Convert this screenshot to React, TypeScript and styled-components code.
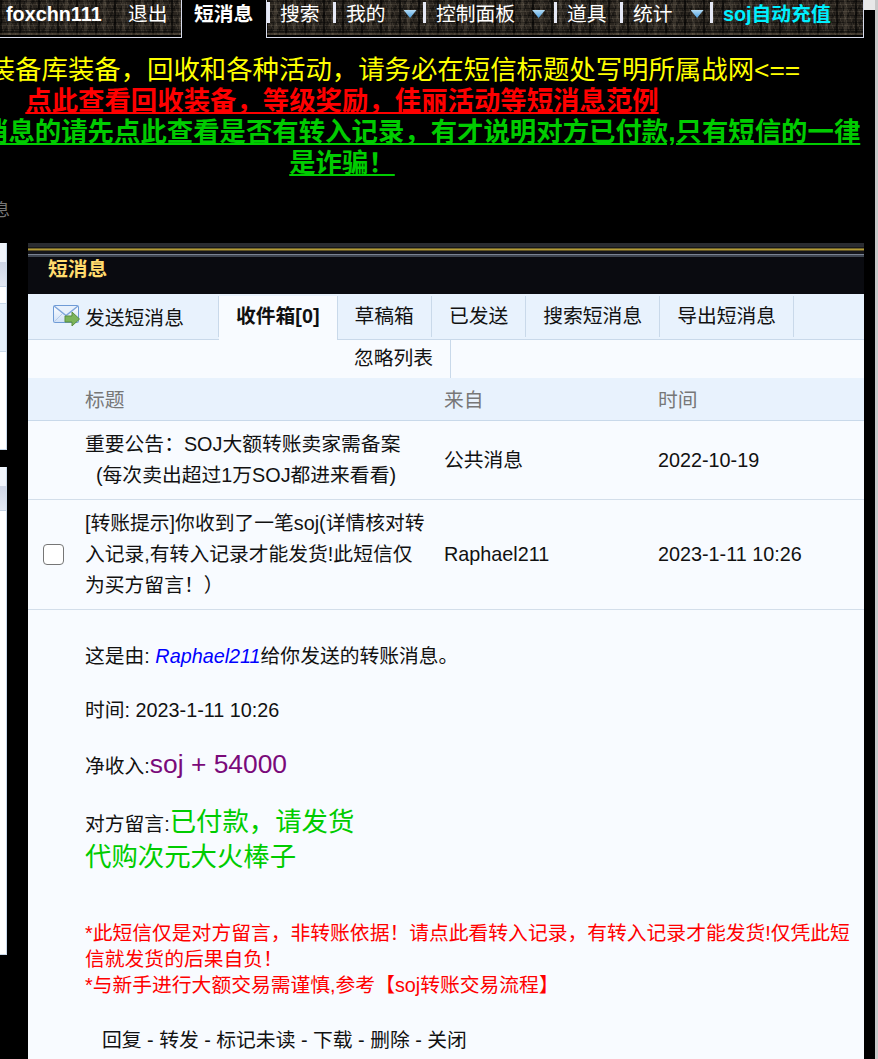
import React from "react";
import styled, { createGlobalStyle } from "styled-components";

const Global = createGlobalStyle`
  html, body { margin: 0; padding: 0; background: #000; overflow: hidden; }
  body { font-family: "Liberation Sans", "Noto Sans CJK SC", sans-serif; font-size: 19.8px; color: #000; }
  * { box-sizing: border-box; }
`;

const Page = styled.div`
  position: relative;
  width: 878px;
  height: 1059px;
  overflow: hidden;
  background: #000;
`;

const Scrollbar = styled.div`
  position: absolute;
  top: 0;
  right: 0;
  width: 3px;
  height: 100%;
  background: #c8c8c8;
`;

const Corner = styled.div`
  position: absolute;
  top: 0;
  right: 3px;
  width: 11px;
  height: 10px;
  background: #e8e8e8;
`;

const Nav = styled.nav`
  display: flex;
  align-items: flex-start;
  width: 864px;
  height: 38px;
  padding-left: 6px;
  border-right: 1px solid #d8dcec;
  border-bottom: 1px solid #d8dcec;
  background-color: #2a251f;
  background-image:
    linear-gradient(180deg, transparent 0 31px, rgba(0,0,0,.55) 31px 33px, rgba(120,105,85,.35) 33px 35px, #000 35px),
    repeating-linear-gradient(90deg, rgba(0,0,0,.6) 0 2px, transparent 2px 8px, rgba(190,175,150,.13) 8px 11px, transparent 11px 19px),
    repeating-linear-gradient(0deg, rgba(0,0,0,.4) 0 1px, transparent 1px 4px, rgba(210,195,170,.12) 4px 5px, transparent 5px 7px),
    repeating-linear-gradient(71deg, rgba(220,205,180,.09) 0 1px, transparent 1px 5px),
    repeating-linear-gradient(-67deg, rgba(0,0,0,.3) 0 2px, transparent 2px 7px);
`;

const NavUser = styled.span`
  width: 122px;
  height: 28px;
  line-height: 29px;
  font-weight: 700;
  color: #fff;
`;

const NavPlain = styled.span`
  width: 53px;
  height: 28px;
  line-height: 29px;
  color: #fff;
`;

const NavActive = styled.span`
  width: 86px;
  height: 38px;
  margin-bottom: -1px;
  padding-left: 12px;
  line-height: 29px;
  font-weight: 700;
  color: #fff;
  background: #000;
  border-left: 1px solid #d8dcec;
  border-right: 1px solid #d8dcec;
`;

const NavItem = styled.span<{ $w: number }>`
  display: flex;
  align-items: flex-start;
  width: ${(p) => p.$w}px;
  height: 21px;
  margin: 2px 0 0;
  padding-left: 10px;
  border-left: 3px solid #e6e9f6;
  line-height: 25px;
  color: #fff;
  white-space: nowrap;
`;

const NavCyan = styled(NavItem)`
  font-weight: 700;
  color: #00f0ff;
`;

const Caret = styled.i<{ $gap: number }>`
  display: block;
  width: 13px;
  height: 8px;
  margin-left: ${(p) => p.$gap}px;
  margin-top: 8px;
  background: linear-gradient(180deg, #b4dcf6, #4a9fe0);
  clip-path: polygon(0 0, 100% 0, 50% 100%);
`;

const Banner = styled.div`
  width: 1040px;
  margin: 17px 0 0 -178px;
  text-align: center;
  font-size: 26.4px;
  line-height: 31px;
  white-space: nowrap;
`;

const BannerLine = styled.div``;

const YellowText = styled.span`
  color: #ffff00;
  position: relative;
  left: 3px;
`;

const RedLink = styled.a`
  color: #ff0000;
  font-weight: 700;
  text-decoration: underline;
`;

const GreenLink = styled.a`
  color: #00cc00;
  font-weight: 700;
  text-decoration: underline;
`;

const Crumb = styled.div`
  margin: 22px 0 0 -41px;
  height: 20px;
  line-height: 20px;
  font-size: 17px;
  color: #777;
`;

const Columns = styled.div`
  display: flex;
  align-items: flex-start;
  gap: 21px;
  margin-top: 22px;
`;

const Side = styled.aside`
  display: flex;
  flex-direction: column;
  gap: 17px;
  flex: 0 0 7px;
`;

const SideBox = styled.div<{ $h: number }>`
  height: ${(p) => p.$h}px;
  background: #fff;
  border-right: 1px solid #c9d9ea;
  border-bottom: 1px solid #c9d9ea;
`;

const SideTop = styled.div`
  height: 19px;
  background: #f0f4fb;
`;

const SideHead = styled.div`
  height: 25px;
  background: linear-gradient(180deg, #cfd6e6, #e3e8f2);
  border-bottom: 1px solid #c4d2e4;
`;

const SideGap = styled.div`
  height: 16px;
  background: #fff;
`;

const SideBlue = styled.div`
  height: 49px;
  background: #e6f0fb;
  border-top: 1px solid #c9d9ea;
  border-bottom: 1px solid #c9d9ea;
`;

const Panel = styled.main`
  flex: 0 0 836px;
  min-height: 830px;
  background: #f8fbff;
`;

const PanelHead = styled.header`
  height: 51px;
  padding: 14px 0 0 20px;
  background:
    linear-gradient(180deg,
      #2a2c31 0 4px, #17171a 4px 5px, #6e6228 5px 6px, #b39b38 6px 7px, #5e5224 7px 8px,
      #15161b 8px 11px, #7a8392 11px 12px, #3f4651 12px 14px, #0a0b10 14px);
  line-height: 24px;
  font-weight: 700;
  color: #ffdc6e;
`;

const TabStrip = styled.div`
  display: flex;
  align-items: flex-start;
  height: 46px;
  padding-top: 2px;
  background: #e8f2fd;
  border-bottom: 1px solid #c9d9ea;
`;

const ComposeTab = styled.a`
  display: flex;
  align-items: center;
  gap: 5px;
  width: 191px;
  height: 41px;
  padding-left: 25px;
  border-right: 1px solid #c9d9ea;
  color: #111;
`;

const Tab = styled.a<{ $active?: boolean }>`
  height: ${(p) => (p.$active ? 44 : 41)}px;
  padding: 0 17px;
  line-height: 41px;
  border-right: 1px solid #c9d9ea;
  color: #111;
  font-weight: ${(p) => (p.$active ? 700 : 400)};
  background: ${(p) => (p.$active ? "#f8fbff" : "transparent")};
`;

const TabOverflow = styled.div`
  display: flex;
  height: 38px;
  padding-left: 309px;
`;

const TabWrapped = styled.a`
  width: 114px;
  padding-left: 17px;
  line-height: 36px;
  border-right: 1px solid #c9d9ea;
  color: #111;
`;

const Row = styled.div`
  display: grid;
  grid-template-columns: 57px 359px 214px 1fr;
  align-items: center;
  border-bottom: 1px solid #d3deea;
  line-height: 31px;
  color: #111;
`;

const HeadRow = styled(Row)`
  height: 43px;
  padding-top: 2px;
  background: #e8f2fd;
  border-bottom-color: #c9d9ea;
  color: #777;
`;

const MessageRow = styled(Row)`
  padding: 8px 0;
`;

const Indent = styled.span`
  padding-left: 11px;
`;

const Check = styled.input.attrs({ type: "checkbox" })`
  appearance: none;
  display: block;
  width: 21px;
  height: 21px;
  margin: 0 0 0 15px;
  background: #fff;
  border: 1px solid #767676;
  border-radius: 4px;
`;

const Body = styled.section`
  padding: 31px 9px 0 57px;
  color: #111;
`;

const Line = styled.div<{ $top?: number; $lh?: number }>`
  margin-top: ${(p) => p.$top ?? 0}px;
  line-height: ${(p) => p.$lh ?? 30}px;
`;

const Sender = styled.a`
  color: #0000ff;
  font-style: italic;
`;

const Amount = styled.span`
  font-size: 26.4px;
  line-height: 1;
  color: #7a0a7a;
`;

const Said = styled.span`
  font-size: 26.4px;
  line-height: 1;
  color: #00cc00;
`;

const Warning = styled.div`
  margin-top: 43px;
  line-height: 26px;
  color: #ff0000;
`;

const Actions = styled.div`
  margin-top: 27px;
  padding-left: 17px;
  line-height: 30px;
  color: #111;
`;

function MailIcon() {
  return (
    <svg width="27" height="23" viewBox="0 0 27 23" aria-hidden="true">
      <defs>
        <linearGradient id="env" x1="0" y1="0" x2="0" y2="1">
          <stop offset="0" stopColor="#ffffff" />
          <stop offset="1" stopColor="#cfe0f6" />
        </linearGradient>
      </defs>
      <rect x="0.5" y="0.5" width="25" height="17" rx="1" fill="url(#env)" stroke="#6f9bd6" />
      <path d="M1 1 L13 10.5 L25 1" fill="#e8f1fc" stroke="#7fa6dc" strokeWidth="1.4" />
      <path d="M1 17 L9 9 M25 17 L18 10" fill="none" stroke="#b4cbea" />
      <path d="M12 11 H19 V7 L26.5 14 L19 21 V17 H12 Z" fill="#7cb45a" stroke="#5b8f3f" strokeWidth="1" />
    </svg>
  );
}

function Sidebar() {
  return (
    <Side>
      <SideBox $h={207}>
        <SideTop />
        <SideHead />
        <SideGap />
        <SideBlue />
      </SideBox>
      <SideBox $h={488}>
        <SideTop />
        <SideHead />
      </SideBox>
    </Side>
  );
}

export default function App() {
  return (
    <Page>
      <Global />
      <Nav>
        <NavUser>foxchn111</NavUser>
        <NavPlain>退出</NavPlain>
        <NavActive>短消息</NavActive>
        <NavItem $w={66}>搜索</NavItem>
        <NavItem $w={90}>我的<Caret $gap={18} /></NavItem>
        <NavItem $w={131}>控制面板<Caret $gap={17} /></NavItem>
        <NavItem $w={66}>道具</NavItem>
        <NavItem $w={90}>统计<Caret $gap={18} /></NavItem>
        <NavCyan $w={140}>soj自动充值</NavCyan>
      </Nav>
      <Banner>
        <BannerLine>
          <YellowText>==&gt;涉及装备库装备，回收和各种活动，请务必在短信标题处写明所属战网&lt;==</YellowText>
        </BannerLine>
        <BannerLine>
          <RedLink>点此查看回收装备，等级奖励，佳丽活动等短消息范例</RedLink>
        </BannerLine>
        <BannerLine>
          <GreenLink>凡收到转账短消息的请先点此查看是否有转入记录，有才说明对方已付款,只有短信的一律</GreenLink>
        </BannerLine>
        <BannerLine>
          <GreenLink>是诈骗！</GreenLink>
        </BannerLine>
      </Banner>
      <Crumb>短消息</Crumb>
      <Columns>
        <Sidebar />
        <Panel>
          <PanelHead>短消息</PanelHead>
          <TabStrip>
            <ComposeTab>
              <MailIcon />
              发送短消息
            </ComposeTab>
            <Tab $active>收件箱[0]</Tab>
            <Tab>草稿箱</Tab>
            <Tab>已发送</Tab>
            <Tab>搜索短消息</Tab>
            <Tab>导出短消息</Tab>
          </TabStrip>
          <TabOverflow>
            <TabWrapped>忽略列表</TabWrapped>
          </TabOverflow>
          <HeadRow>
            <span />
            <span>标题</span>
            <span>来自</span>
            <span>时间</span>
          </HeadRow>
          <MessageRow>
            <span />
            <span>
              重要公告：SOJ大额转账卖家需备案
              <br />
              <Indent>(每次卖出超过1万SOJ都进来看看)</Indent>
            </span>
            <span>公共消息</span>
            <span>2022-10-19</span>
          </MessageRow>
          <MessageRow>
            <Check />
            <span>
              [转账提示]你收到了一笔soj(详情核对转
              <br />
              入记录,有转入记录才能发货!此短信仅
              <br />
              为买方留言！）
            </span>
            <span>Raphael211</span>
            <span>2023-1-11 10:26</span>
          </MessageRow>
          <Body>
            <Line>
              这是由: <Sender>Raphael211</Sender>给你发送的转账消息。
            </Line>
            <Line $top={24}>时间: 2023-1-11 10:26</Line>
            <Line $top={24} $lh={34}>
              净收入:<Amount>soj + 54000</Amount>
            </Line>
            <Line $top={24} $lh={35}>
              对方留言:<Said>已付款，请发货</Said>
              <br />
              <Said>代购次元大火棒子</Said>
            </Line>
            <Warning>
              *此短信仅是对方留言，非转账依据！请点此看转入记录，有转入记录才能发货!仅凭此短信就发货的后果自负！
              <br />
              *与新手进行大额交易需谨慎,参考【soj转账交易流程】
            </Warning>
            <Actions>回复 - 转发 - 标记未读 - 下载 - 删除 - 关闭</Actions>
          </Body>
        </Panel>
      </Columns>
      <Corner />
      <Scrollbar />
    </Page>
  );
}
